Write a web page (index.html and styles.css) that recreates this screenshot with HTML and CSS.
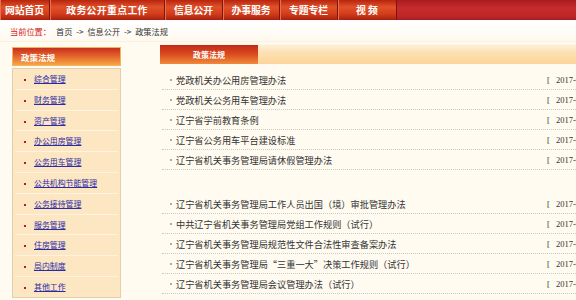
FILE: index.html
```html
<!DOCTYPE html>
<html lang="zh-CN">
<head>
  <meta charset="UTF-8">
  <title>政策法规</title>
  <link rel="stylesheet" href="styles.css">
</head>
<body>
  <div class="page">
    <!-- top navigation -->
    <div class="nav">
      <a class="nav-item nav-home" href="#">网站首页</a>
      <a class="nav-item nav-key" href="#">政务公开重点工作</a>
      <a class="nav-item nav-info" href="#">信息公开</a>
      <a class="nav-item nav-serv" href="#">办事服务</a>
      <a class="nav-item nav-topic" href="#">专题专栏</a>
      <a class="nav-item nav-video" href="#">视&nbsp;频</a>
    </div>

    <div class="crumb">
      <span class="crumb-label">当前位置：</span>首页 -&gt; 信息公开 -&gt; 政策法规
    </div>

    <div class="main">
      <div class="side">
        <div class="side-head">政策法规</div>
        <ul class="side-menu">
          <li><a href="#">综合管理</a></li>
          <li><a href="#">财务管理</a></li>
          <li><a href="#">资产管理</a></li>
          <li><a href="#">办公用房管理</a></li>
          <li><a href="#">公务用车管理</a></li>
          <li><a href="#">公共机构节能管理</a></li>
          <li><a href="#">公务接待管理</a></li>
          <li><a href="#">服务管理</a></li>
          <li><a href="#">住房管理</a></li>
          <li><a href="#">局内制度</a></li>
          <li><a href="#">其他工作</a></li>
        </ul>
      </div>

      <div class="content">
        <div class="content-head"><span class="tab">政策法规</span></div>
        <ul class="news">
          <li><a href="#">党政机关办公用房管理办法</a><span class="date">[ 2017-08-14 ]</span></li>
          <li><a href="#">党政机关公务用车管理办法</a><span class="date">[ 2017-08-14 ]</span></li>
          <li><a href="#">辽宁省学前教育条例</a><span class="date">[ 2017-07-26 ]</span></li>
          <li><a href="#">辽宁省公务用车平台建设标准</a><span class="date">[ 2017-07-20 ]</span></li>
          <li><a href="#">辽宁省机关事务管理局请休假管理办法</a><span class="date">[ 2017-06-30 ]</span></li>
        </ul>
        <ul class="news news-next">
          <li><a href="#">辽宁省机关事务管理局工作人员出国（境）审批管理办法</a><span class="date">[ 2017-06-30 ]</span></li>
          <li><a href="#">中共辽宁省机关事务管理局党组工作规则（试行）</a><span class="date">[ 2017-06-30 ]</span></li>
          <li><a href="#">辽宁省机关事务管理局规范性文件合法性审查备案办法</a><span class="date">[ 2017-06-30 ]</span></li>
          <li><a href="#">辽宁省机关事务管理局“三重一大”决策工作规则（试行）</a><span class="date">[ 2017-06-30 ]</span></li>
          <li><a href="#">辽宁省机关事务管理局会议管理办法（试行）</a><span class="date">[ 2017-06-30 ]</span></li>
        </ul>
      </div>
    </div>
  </div>
</body>
</html>
```

FILE: styles.css
```css
html, body {
  margin: 0;
  padding: 0;
  overflow: hidden;
  background: #fffbf0;
}
body {
  font-family: "Noto Sans CJK SC", "DejaVu Sans", sans-serif;
  color: #333;
}
a {
  text-decoration: none;
  color: inherit;
}
ul {
  list-style: none;
  margin: 0;
  padding: 0;
}
.page {
  width: 620px;
}

/* nav */
.nav {
  display: flex;
  height: 20px;
  background: linear-gradient(#a81c20, #c62c2e 40%, #c02628 80%, #a61e20);
}
.nav-item {
  box-sizing: border-box;
  height: 20px;
  line-height: 21px;
  text-align: center;
  color: #fff;
  font-weight: bold;
  font-size: 9.8px;
  background: linear-gradient(#b8240e, #e0522a 35%, #d23c1a 70%, #a82010);
  border-right: 1px solid #7e140c;
  box-shadow: inset 1px 0 0 #e8704a;
}
.nav-home { width: 50px; }
.nav-key { width: 115px; letter-spacing: 0.4px; }
.nav-info { width: 58px; }
.nav-serv { width: 57px; }
.nav-topic { width: 58px; }
.nav-video { width: 59px; }

/* breadcrumb */
.crumb {
  height: 22px;
  line-height: 23px;
  padding-left: 10px;
  font-size: 8.2px;
  word-spacing: 2px;
  color: #333;
  background: linear-gradient(#fff, #fffaf0);
  border-bottom: 1px solid #fbf0dc;
  box-sizing: border-box;
}
.crumb-label {
  color: #d01c1c;
  margin-right: 5px;
}

/* layout */
.main {
  display: flex;
  align-items: flex-start;
}
.side {
  width: 109px;
  margin-left: 12px;
  margin-top: 5px;
}
.content {
  flex: 1;
  margin-left: 39px;
  margin-top: 2px;
}

/* left menu */
.side-head {
  height: 19px;
  line-height: 19px;
  box-sizing: border-box;
  padding-left: 8px;
  color: #fff;
  font-weight: bold;
  font-size: 8.5px;
  font-family: "Noto Sans CJK SC", serif;
  background: linear-gradient(#c8301c, #e2602a 45%, #f7a643);
  border: 1px solid #f3b060;
}
.side-menu {
  margin-top: 2px;
  background: #fde6c2;
  border: 1px solid #dfcfae;
  padding: 0 2px;
}
.side-menu li {
  height: 19.8px;
  line-height: 20px;
  font-size: 7.9px;
  padding-left: 19px;
  border-bottom: 1px solid #fff2df;
  position: relative;
}
.side-menu li:last-child {
  border-bottom: none;
}
.side-menu li::before {
  content: "";
  position: absolute;
  left: 9px;
  top: 10px;
  width: 2px;
  height: 2px;
  background: #c8102e;
}
.side-menu a {
  color: #2b2ba8;
  text-decoration: underline;
}

/* right list */
.content-head {
  height: 20px;
  box-sizing: border-box;
  background: linear-gradient(#fdf0d8, #fde0b2 40%, #fbd49a);
  border-top: 1px solid #fff6e4;
}
.tab {
  display: block;
  width: 98px;
  height: 19px;
  line-height: 19px;
  text-align: center;
  color: #fff;
  font-weight: bold;
  font-size: 8px;
  background: linear-gradient(#c22a1c, #d8481e 45%, #f08a3a);
}
.news {
  margin: 6px 0 0 2px;
}
.news-next {
  margin-top: 24px;
}
.news li {
  display: flex;
  height: 19px;
  line-height: 20px;
  border-bottom: 1px dotted #cfcac0;
  font-size: 9.2px;
  padding-left: 14px;
  position: relative;
}
.news li::before {
  content: "";
  position: absolute;
  left: 8px;
  top: 9px;
  width: 2px;
  height: 2px;
  background: #b0aca4;
}
.news a {
  flex: 1;
  color: #333;
}
.news .date {
  width: 73px;
  font-family: "Liberation Serif", serif;
  font-size: 8.5px;
  word-spacing: 4px;
  color: #333;
}
```
